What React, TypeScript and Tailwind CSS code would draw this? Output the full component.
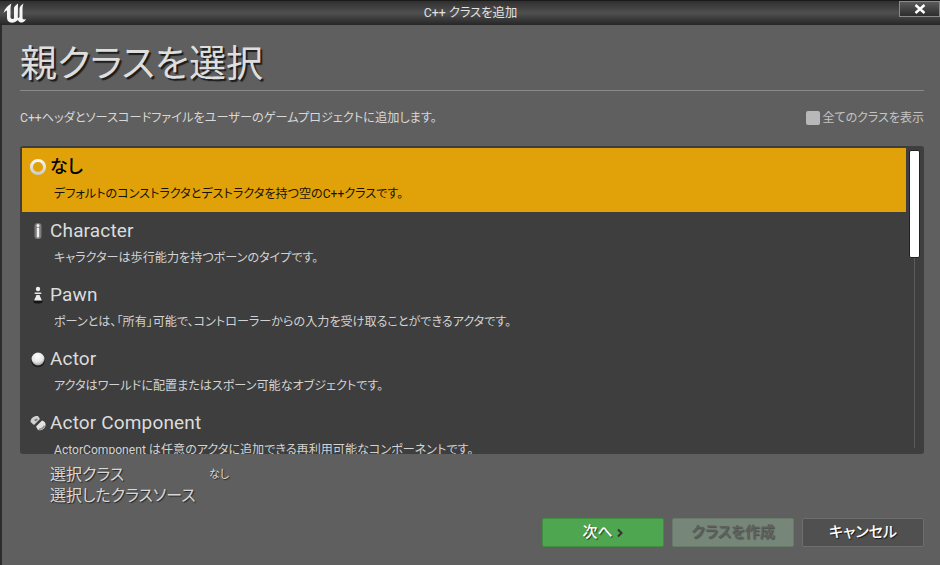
import type { ReactNode } from "react";

const font = "font-['Roboto','Noto_Sans_CJK_JP',sans-serif]";

function UnrealLogo() {
  return (
    <svg width="24" height="22" viewBox="0 0 24 22" className="shrink-0">
      <path
        d="M0.5 11 C1.5 7 4 4 8.5 1.5 C7.5 4 7.5 6 7.5 8 L7.5 15 C7.5 17 9.5 17.5 11 16.5 L11 6 C11 5 12 4 15 1.5 L14.8 16 C15.5 16 16 15.5 16.5 15 L16.5 7 C16.5 5 18 3 20.5 1.5 C19.5 4 19.5 6 19.5 8 L19.5 15.5 C19.5 17.5 21 18 23 17 C22 19.5 20 21 18 20.5 C16.5 20.3 15.5 19.5 15 18 C13 20 10 21 7.5 20.5 C5 20 4 18 4 15.5 L4 8.5 C2.5 9 1.5 10 0.5 11 Z"
        fill="#f6f6f6"
      />
    </svg>
  );
}

function CircleIcon() {
  return (
    <svg width="18" height="18" viewBox="0 0 18 18">
      <defs>
        <linearGradient id="ring" x1="0" y1="0" x2="0" y2="1">
          <stop offset="0" stopColor="#f6f6f6" />
          <stop offset="1" stopColor="#cfcdc6" />
        </linearGradient>
      </defs>
      <circle cx="9" cy="9" r="6.6" fill="none" stroke="url(#ring)" strokeWidth="3" />
    </svg>
  );
}

function CharacterIcon() {
  return (
    <svg width="16" height="18" viewBox="0 0 16 18">
      <rect x="4.5" y="1" width="7" height="16" rx="3" fill="#7c7c7c" />
      <circle cx="8" cy="3.5" r="1.5" fill="#f0f0f0" />
      <rect x="6.8" y="5.5" width="2.4" height="10" rx="1" fill="#f0f0f0" />
    </svg>
  );
}

function PawnIcon() {
  return (
    <svg width="16" height="18" viewBox="0 0 16 18">
      <ellipse cx="8" cy="15.5" rx="4.6" ry="2" fill="#161616" />
      <circle cx="8" cy="3" r="2.2" fill="#f0f0f0" />
      <rect x="4.5" y="6.5" width="7" height="1.6" rx="0.8" fill="#e8e8e8" />
      <path d="M6.4 9 H9.6 C10 11 11 12 11.8 14.5 H4.2 C5 12 6 11 6.4 9 Z" fill="#ececec" />
    </svg>
  );
}

function ActorIcon() {
  return (
    <svg width="16" height="17" viewBox="0 0 16 17">
      <defs>
        <radialGradient id="ball" cx="0.45" cy="0.3" r="0.75">
          <stop offset="0" stopColor="#ffffff" />
          <stop offset="0.6" stopColor="#e6e6e6" />
          <stop offset="1" stopColor="#8e8e8e" />
        </radialGradient>
      </defs>
      <ellipse cx="8" cy="10.5" rx="6.6" ry="5.8" fill="#1e1e1e" />
      <circle cx="8" cy="8" r="6.4" fill="url(#ball)" />
    </svg>
  );
}

function ComponentIcon() {
  return (
    <svg width="18" height="18" viewBox="0 0 18 18">
      <path d="M1.5 8 C1.5 4 5 1.5 9 2 L11 5 L5 11 Z" fill="#d0d0d0" />
      <path d="M5 6 C6 5 8 4.5 9 5 L7 7.5 Z" fill="#7e7e7e" />
      <path d="M7 12.5 L13 6.5 C15.5 7 17 9 16.5 11.5 C16 15 12 17 9 16 Z" fill="#e2e2e2" />
      <path d="M10 14.5 C12 14.5 14 13 15 11 L16 12.5 C15 15 12 16.5 9.5 16 Z" fill="#8e8e8e" />
    </svg>
  );
}

function ClassRow({ icon, name, desc, selected }: { icon: ReactNode; name: string; desc: string; selected?: boolean }) {
  return (
    <div className={`h-16 shrink-0 pl-[6px] pt-[5px] ${selected ? "bg-[#e0a208] text-black" : "text-[#dcdcdc]"}`}>
      <div className="flex h-7 items-center">
        <span className="flex w-[20px] shrink-0 items-center justify-center">{icon}</span>
        <span className={`ml-[2px] leading-7 ${selected ? "text-[18px] font-medium" : "text-[19px] tracking-[0.15px]"}`}>{name}</span>
      </div>
      <p className={`ml-[26px] mt-[5px] text-[12.1px] leading-[16px] whitespace-nowrap ${selected ? "text-[#1a1200]" : "text-[#d2d2d2]"}`}>{desc}</p>
    </div>
  );
}

function FooterButton({ children, className }: { children: ReactNode; className: string }) {
  return (
    <button className={`flex h-[29px] w-[122px] items-center justify-center rounded-[2px] border text-[15px] font-medium ${className}`}>
      {children}
    </button>
  );
}

export default function App() {
  return (
    <div className={`flex h-[565px] w-[940px] flex-col overflow-hidden bg-[#5f5f5f] [font-feature-settings:'palt'] ${font}`}>
      <header className="flex h-[25px] shrink-0 items-center border-t border-[#1a1a1a] bg-gradient-to-b from-[#303030] via-[#505050] to-[#262626] pl-[3px]">
        <UnrealLogo />
        <span className="flex-1 pl-[15px] text-center text-[12.3px] text-[#e2e2e2]">C++ クラスを追加</span>
        <button className="mb-[9px] flex h-[16px] w-[41px] items-center justify-center border border-[#8a8a8a] bg-gradient-to-b from-[#5a5a5a] to-[#2e2e2e]">
          <svg width="12" height="10" viewBox="0 0 12 10">
            <path d="M1.5 1 L10.5 9 M10.5 1 L1.5 9" stroke="#ffffff" strokeWidth="2.4" />
          </svg>
        </button>
      </header>

      <main className="flex min-h-0 flex-1 flex-col border-l-2 border-[#2c2c2c] pl-[18px] pr-[16px]">
        <h1 className="mt-[15px] h-[50px] text-[37px] leading-[50px] text-[#dedede] [text-shadow:2px_2px_1px_rgba(0,0,0,0.7)]">親クラスを選択</h1>
        <div className="h-px bg-[#8a8a8a]" />

        <div className="mt-[19px] flex h-[16px] items-center justify-between text-[12.2px] text-[#d8d8d8]">
          <p>C++ヘッダとソースコードファイルをユーザーのゲームプロジェクトに追加します。</p>
          <label className="flex items-center gap-[3px] text-[12px] text-[#c4c4c4]">
            <span className="h-[14px] w-[14px] rounded-[2px] bg-[#b8b8b8]" />
            全てのクラスを表示
          </label>
        </div>

        <section className="mt-[20px] flex h-[308px] rounded-[3px] bg-[#3e3e3e] pt-[2px] pl-[2px]">
          <div className="flex w-[884px] shrink-0 flex-col overflow-hidden">
            <ClassRow selected icon={<CircleIcon />} name="なし" desc="デフォルトのコンストラクタとデストラクタを持つ空のC++クラスです。" />
            <ClassRow icon={<CharacterIcon />} name="Character" desc="キャラクターは歩行能力を持つボーンのタイプです。" />
            <ClassRow icon={<PawnIcon />} name="Pawn" desc="ポーンとは、「所有」可能で、コントローラーからの入力を受け取ることができるアクタです。" />
            <ClassRow icon={<ActorIcon />} name="Actor" desc="アクタはワールドに配置またはスポーン可能なオブジェクトです。" />
            <ClassRow icon={<ComponentIcon />} name="Actor Component" desc="ActorComponent は任意のアクタに追加できる再利用可能なコンポーネントです。" />
          </div>
          <div className="ml-[2px] flex w-[12px] flex-col items-center pt-[2px]">
            <div className="h-[108px] w-[11px] shrink-0 rounded-[2px] border border-[#222222] bg-white" />
            <div className="mb-[6px] w-px flex-1 bg-[#5a5a5a]" />
          </div>
        </section>

        <div className="mt-[10px] flex pl-[30px] text-[16px] leading-[21px] text-[#d8d8d8] [text-shadow:1px_1px_1px_rgba(0,0,0,0.6)]">
          <div className="w-[159px]">
            <p>選択クラス</p>
            <p className="whitespace-nowrap">選択したクラスソース</p>
          </div>
          <span className="text-[11px] leading-[21px]">なし</span>
        </div>

        <div className="mt-[12px] flex justify-end gap-[8px]">
          <FooterButton className="border-[#3f8f3f] bg-[#4fa651] text-white [text-shadow:1px_1px_1px_rgba(0,0,0,0.6)]">
            次へ
            <svg width="8" height="10" viewBox="0 0 8 10" className="ml-[3px]">
              <path d="M2 1.5 L5.5 5 L2 8.5" fill="none" stroke="#333333" strokeWidth="2" />
            </svg>
          </FooterButton>
          <FooterButton className="border-[#6a7a6a] bg-[#76877a] text-[#5f5f5f] [text-shadow:1px_1px_1px_rgba(0,0,0,0.4)]">クラスを作成</FooterButton>
          <FooterButton className="border-[#6e6e6e] bg-[#505050] text-white [text-shadow:1px_1px_1px_rgba(0,0,0,0.7)]">キャンセル</FooterButton>
        </div>
      </main>
    </div>
  );
}
